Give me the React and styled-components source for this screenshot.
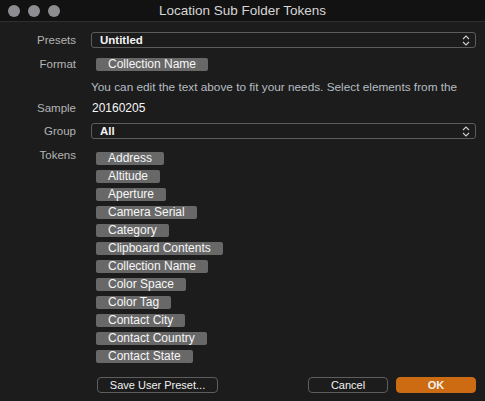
import React from "react";
import styled, { createGlobalStyle } from "styled-components";

const GlobalStyle = createGlobalStyle`
  html, body {
    margin: 0;
    padding: 0;
    background: #1c1c1c;
  }
  body {
    font-family: "Liberation Sans", Arial, sans-serif;
    -webkit-font-smoothing: antialiased;
  }
`;

const Window = styled.div`
  width: 485px;
  height: 401px;
  background: #1c1c1c;
  display: flex;
  flex-direction: column;
  overflow: hidden;
`;

const TitleBar = styled.div`
  height: 21px;
  background: #121212;
  border-bottom: 1px solid #2e2e2e;
  display: flex;
  align-items: center;
  position: relative;
  padding-left: 8px;
  gap: 8px;
`;

const Light = styled.span`
  width: 12px;
  height: 12px;
  border-radius: 50%;
  background: #8e8e92;
`;

const Title = styled.div`
  position: absolute;
  left: 0;
  right: 0;
  text-align: center;
  font-size: 13.5px;
  color: #d6d6d6;
  pointer-events: none;
`;

const Body = styled.div`
  flex: 1;
  display: flex;
  flex-direction: column;
  padding: 10px 9px 0 0;
`;

const Row = styled.div`
  display: grid;
  grid-template-columns: 76px 1fr;
  column-gap: 15px;
  align-items: ${(p) => (p.top ? "start" : "center")};
  margin-top: ${(p) => p.mt || 0}px;
  line-height: 14px;
`;

const Label = styled.div`
  text-align: right;
  font-size: 11.5px;
  color: #b4b4b4;
`;

const Popup = styled.div`
  height: 14px;
  border: 1px solid #5c5c5c;
  border-radius: 3px;
  display: flex;
  align-items: center;
  justify-content: space-between;
  padding: 0 5px 0 8px;
  font-size: 11.5px;
  font-weight: bold;
  color: #f4f4f4;
`;

const Token = styled.span`
  display: inline-block;
  align-self: flex-start;
  background: #686868;
  color: #f6f6f6;
  font-size: 12px;
  line-height: 13px;
  height: 13px;
  padding: 0 12px;
  border-radius: 2px;
  margin-left: ${(p) => p.ml || 0}px;
`;

const Note = styled.div`
  font-size: 11.8px;
  color: #b6bcc2;
  white-space: nowrap;
`;

const Value = styled.div`
  font-size: 12px;
  color: #f6f6f6;
  padding-left: 1px;
`;

const TokenList = styled.div`
  display: flex;
  flex-direction: column;
  gap: 5px;
  padding-top: 4px;
  padding-left: 5px;
`;

const Footer = styled.div`
  display: flex;
  align-items: center;
  padding: 0 0 0 97px;
  margin-top: 14px;
`;

const Button = styled.button`
  height: 16px;
  width: ${(p) => p.w}px;
  margin-left: ${(p) => p.ml || 0}px;
  border-radius: 4px;
  border: 1px solid ${(p) => (p.primary ? "#c86c14" : "#5e5e5e")};
  background: ${(p) => (p.primary ? "#cc6b12" : "#1c1c1c")};
  color: #f2f2f2;
  font-family: "Liberation Sans", Arial, sans-serif;
  font-size: 11px;
  font-weight: ${(p) => (p.primary ? "bold" : "normal")};
  padding: 0;
  display: flex;
  align-items: center;
  justify-content: center;
`;

const Spacer = styled.div`
  flex: 1;
`;

const Chevron = () => (
  <svg width="8" height="11" viewBox="0 0 8 11" fill="none" stroke="#cfcfcf" strokeWidth="1.1">
    <path d="M1 4 L4 1 L7 4" />
    <path d="M1 7 L4 10 L7 7" />
  </svg>
);

const tokens = [
  "Address",
  "Altitude",
  "Aperture",
  "Camera Serial",
  "Category",
  "Clipboard Contents",
  "Collection Name",
  "Color Space",
  "Color Tag",
  "Contact City",
  "Contact Country",
  "Contact State",
];

export default function App() {
  return (
    <Window>
      <GlobalStyle />
      <TitleBar>
        <Light />
        <Light />
        <Light />
        <Title>Location Sub Folder Tokens</Title>
      </TitleBar>
      <Body>
        <Row>
          <Label>Presets</Label>
          <Popup>
            <span>Untitled</span>
            <Chevron />
          </Popup>
        </Row>
        <Row mt={8}>
          <Label>Format</Label>
          <div>
            <Token ml={5}>Collection Name</Token>
          </div>
        </Row>
        <Row mt={9}>
          <span />
          <Note>You can edit the text above to fit your needs. Select elements from the</Note>
        </Row>
        <Row mt={7}>
          <Label>Sample</Label>
          <Value>20160205</Value>
        </Row>
        <Row mt={8}>
          <Label>Group</Label>
          <Popup>
            <span>All</span>
            <Chevron />
          </Popup>
        </Row>
        <Row top mt={9}>
          <Label>Tokens</Label>
          <TokenList>
            {tokens.map((t) => (
              <Token key={t}>{t}</Token>
            ))}
          </TokenList>
        </Row>
        <Footer>
          <Button w={121}>Save User Preset...</Button>
          <Spacer />
          <Button w={80}>Cancel</Button>
          <Button w={80} ml={8} primary>
            OK
          </Button>
        </Footer>
      </Body>
    </Window>
  );
}
